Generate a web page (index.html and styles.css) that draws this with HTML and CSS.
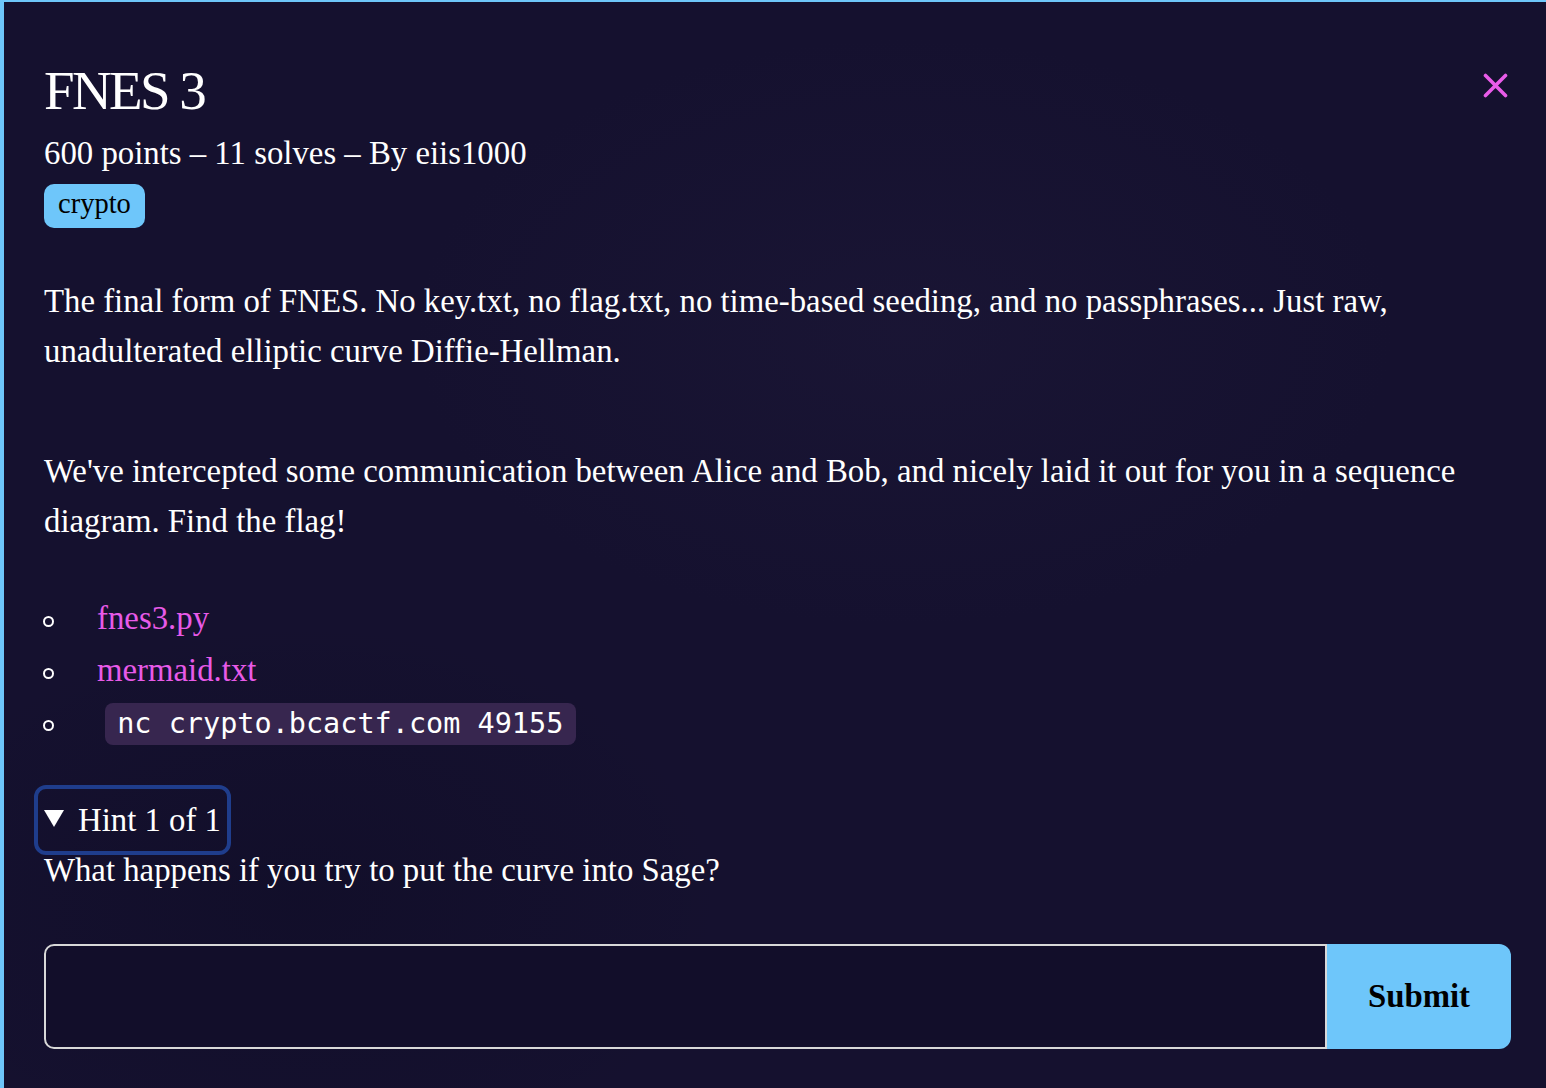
FILE: index.html
```html
<!DOCTYPE html>
<html lang="en">
<head>
<meta charset="utf-8">
<title>FNES 3</title>
<link rel="stylesheet" href="styles.css">
</head>
<body>
<main class="modal">
  <header class="head">
    <h1 class="title">FNES 3</h1>
    <button class="close" aria-label="Close">
      <svg width="25" height="25" viewBox="0 0 25 25"><path d="M2.5 2.5 L22.5 22.5 M22.5 2.5 L2.5 22.5" stroke="#e95ce9" stroke-width="3.6" stroke-linecap="round" fill="none"/></svg>
    </button>
  </header>
  <div class="meta">600 points – 11 solves – By eiis1000</div>
  <div class="tags"><span class="tag">crypto</span></div>

  <div class="desc">
    <p class="p1">The final form of FNES. No key.txt, no flag.txt, no time-based seeding, and no passphrases... Just raw, unadulterated elliptic curve Diffie-Hellman.</p>
    <p class="p2">We've intercepted some communication between Alice and Bob, and nicely laid it out for you in a sequence diagram. Find the flag!</p>
    <ul class="files">
      <li><a href="#">fnes3.py</a></li>
      <li><a href="#">mermaid.txt</a></li>
      <li>&nbsp;<code class="chip">nc crypto.bcactf.com 49155</code></li>
    </ul>
  </div>

  <details class="hint" open>
    <summary class="hint-sum">Hint 1 of 1</summary>
    <div class="hint-body">What happens if you try to put the curve into Sage?</div>
  </details>

  <form class="flag-form">
    <input class="flag-input" type="text" aria-label="Flag">
    <button class="submit" type="button">Submit</button>
  </form>
</main>
</body>
</html>
```
FILE: styles.css
```css
html, body {
  margin: 0;
  padding: 0;
  height: 100%;
}
body {
  background: #15112f;
  font-family: "Liberation Serif", "Times New Roman", serif;
  color: #ffffff;
  overflow: hidden;
}
.modal {
  box-sizing: border-box;
  min-height: 100%;
  border-top: 2px solid #6ec6fa;
  border-left: 4px solid #6ec6fa;
  padding: 0 35px 0 40px;
  background:
    radial-gradient(ellipse 700px 420px at 900px 330px, rgba(36, 30, 64, 0.3), rgba(36, 30, 64, 0) 70%),
    radial-gradient(ellipse 600px 400px at 300px 900px, rgba(10, 8, 30, 0.3), rgba(10, 8, 30, 0) 70%),
    #15112f;
}
.head {
  display: flex;
  justify-content: space-between;
  align-items: flex-start;
}
.title {
  margin: 61px 0 0 0;
  font-size: 55px;
  line-height: 55px;
  font-weight: normal;
  letter-spacing: -2.6px;
}
.close {
  margin: 71px 3px 0 0;
  padding: 0;
  background: none;
  border: none;
  width: 25px;
  height: 25px;
  display: flex;
}
.meta {
  margin-top: 10px;
  font-size: 32.8px;
  line-height: 50px;
}
.tags {
  margin-top: 6px;
  display: flex;
}
.tag {
  background: #6ec6fa;
  color: #000;
  font-size: 28.5px;
  line-height: 40px;
  padding: 0 14px 4px 14px;
  border-radius: 10px;
}
.desc {
  font-size: 32.8px;
  line-height: 50px;
}
.desc p {
  margin: 0;
}
.p1 {
  padding-top: 48px;
}
.p2 {
  padding-top: 70px;
}
.files {
  list-style: none;
  margin: 46px 0 0 0;
  padding: 0;
  line-height: 52px;
}
.files li::before {
  content: "";
  display: inline-block;
  box-sizing: border-box;
  width: 11px;
  height: 11px;
  border: 2px solid #ffffff;
  border-radius: 50%;
  margin: 0 43px 0 -1px;
  vertical-align: middle;
}
.files a {
  color: #e85ae8;
  text-decoration: none;
}
.chip {
  font-family: "DejaVu Sans Mono", "Liberation Mono", monospace;
  font-size: 28.5px;
  background: #37264f;
  color: #ffffff;
  padding: 4px 13px 5px 12px;
  border-radius: 8px;
}
.hint {
  margin-top: 45px;
  font-size: 32.8px;
  line-height: 50px;
}
.hint-sum {
  display: block;
  width: fit-content;
  list-style: none;
  cursor: pointer;
  outline: 4px solid #1f3d8c;
  outline-offset: 6px;
  border-radius: 2px;
}
.hint-sum::-webkit-details-marker {
  display: none;
}
.hint-sum::before {
  content: "";
  display: inline-block;
  width: 0;
  height: 0;
  border-left: 10px solid transparent;
  border-right: 10px solid transparent;
  border-top: 17px solid #ffffff;
  margin-right: 14px;
  vertical-align: 4px;
}
.flag-form {
  display: flex;
  margin-top: 49px;
  height: 105px;
}
.flag-input {
  flex: 1;
  box-sizing: border-box;
  height: 105px;
  margin: 0;
  border: 2px solid #d8d8d8;
  border-radius: 10px 0 0 10px;
  background: #120e2a;
  color: #ffffff;
  font-size: 32px;
  padding: 0 16px;
}
.submit {
  width: 184px;
  height: 105px;
  margin: 0;
  border: none;
  border-radius: 0 12px 12px 0;
  background: #6ec6fa;
  color: #000;
  font-family: "Liberation Serif", "Times New Roman", serif;
  font-weight: bold;
  font-size: 32.8px;
}
```
